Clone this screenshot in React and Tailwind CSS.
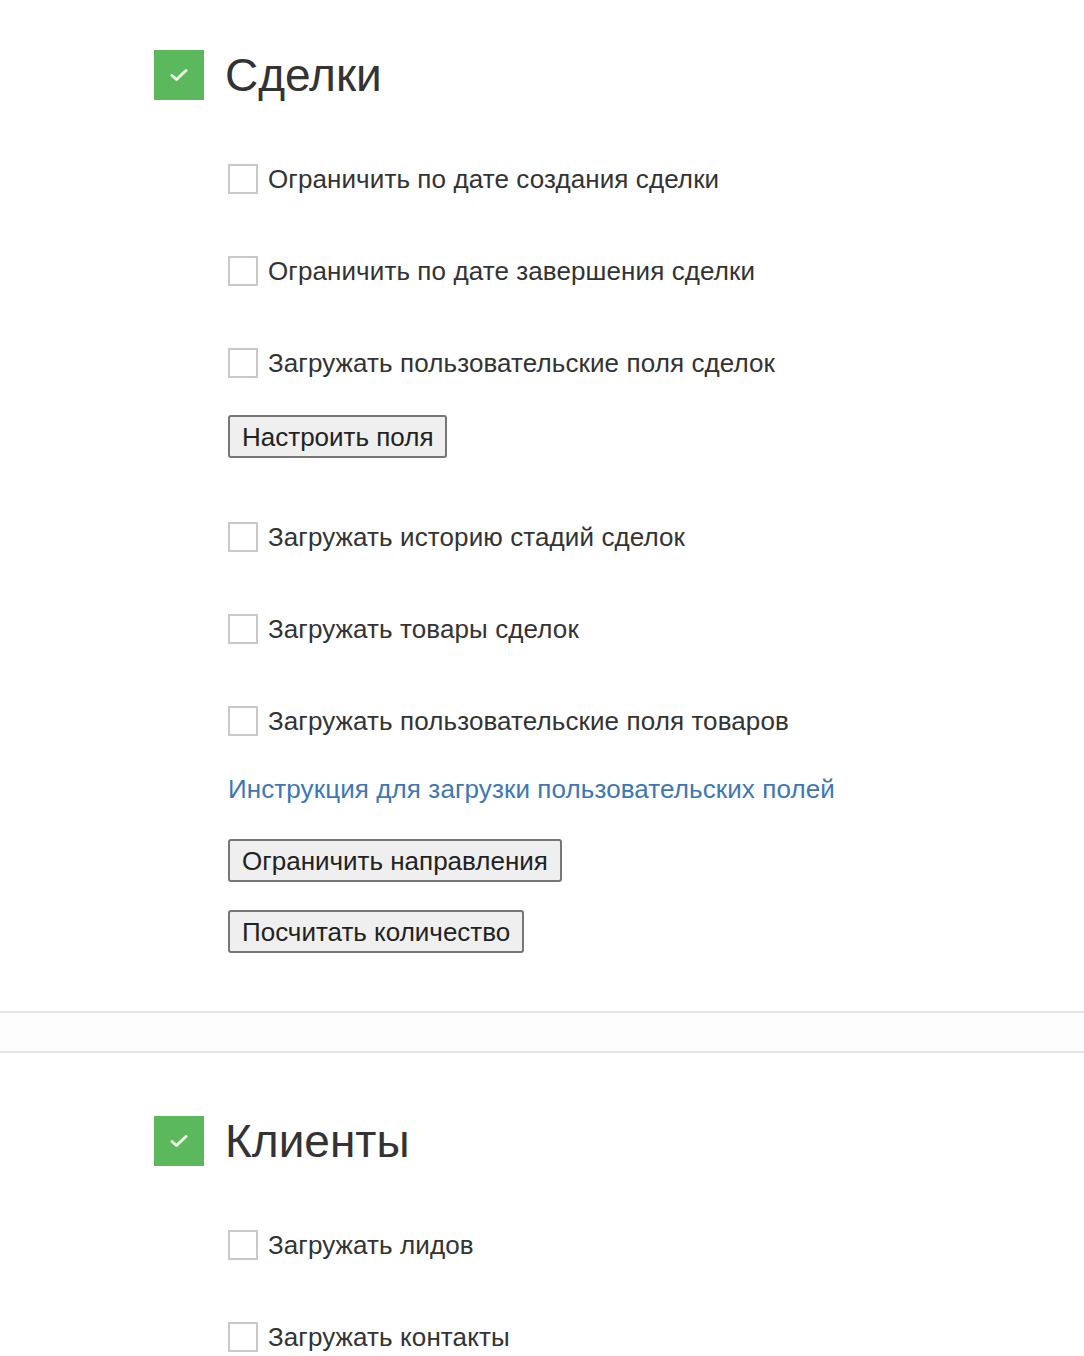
const CheckRow = ({ label, className = "" }) => (
  <label className={`flex h-[30px] items-center ${className}`}>
    <span className="box-border h-[30px] w-[30px] shrink-0 border-2 border-[#c9c9c9] bg-white" />
    <span className="ml-[10px] text-[26px] leading-none tracking-[0.1px] text-[#333]">{label}</span>
  </label>
);

const Btn = ({ children, className = "" }) => (
  <button
    className={`box-border h-[43px] self-start rounded-[3px] border-2 border-[#767676] bg-[#efefef] px-[12px] text-[26px] leading-none text-[#222] ${className}`}
  >
    {children}
  </button>
);

const Heading = ({ title, className = "" }) => (
  <div className={`flex items-center ${className}`}>
    <span className="flex h-[50px] w-[50px] items-center justify-center bg-[#5cb85c]">
      <svg width="18" height="14" viewBox="0 0 18 14" fill="none">
        <path
          d="M2 7.5l4.5 4L16 2.5"
          stroke="#e9f9e4"
          strokeWidth="3"
          strokeLinecap="round"
          strokeLinejoin="round"
        />
      </svg>
    </span>
    <h2 className="ml-[21px] text-[46px] leading-none text-[#333]">{title}</h2>
  </div>
);

export default function App() {
  return (
    <div className="min-h-[1356px] bg-white font-['Liberation_Sans',Arial,sans-serif]">
      {/* сделки */}
      <section className="flex flex-col pl-[154px] pt-[50px]">
        <Heading title="Сделки" />
        <div className="ml-[74px] flex flex-col">
          <CheckRow className="mt-[64px]" label="Ограничить по дате создания сделки" />
          <CheckRow className="mt-[62px]" label="Ограничить по дате завершения сделки" />
          <CheckRow className="mt-[62px]" label="Загружать пользовательские поля сделок" />
          <Btn className="mt-[37px]">Настроить поля</Btn>
          <CheckRow className="mt-[64px]" label="Загружать историю стадий сделок" />
          <CheckRow className="mt-[62px]" label="Загружать товары сделок" />
          <CheckRow className="mt-[62px]" label="Загружать пользовательские поля товаров" />
          <a href="#" className="mt-[40px] text-[26px] leading-none tracking-[0.1px] text-[#3d78b4]">
            Инструкция для загрузки пользовательских полей
          </a>
          <Btn className="mt-[37px]">Ограничить направления</Btn>
          <Btn className="mt-[28px]">Посчитать количество</Btn>
        </div>
      </section>

      <div className="mt-[58px] h-[2px] bg-[#e4e3ea]" />
      <div className="h-[38px] bg-[#fdfdfd]" />
      <div className="h-[2px] bg-[#e4e3ea]" />

      {/* клиенты */}
      <section className="flex flex-col pl-[154px] pt-[63px]">
        <Heading title="Клиенты" />
        <div className="ml-[74px] flex flex-col">
          <CheckRow className="mt-[64px]" label="Загружать лидов" />
          <CheckRow className="mt-[62px]" label="Загружать контакты" />
        </div>
      </section>
    </div>
  );
}
